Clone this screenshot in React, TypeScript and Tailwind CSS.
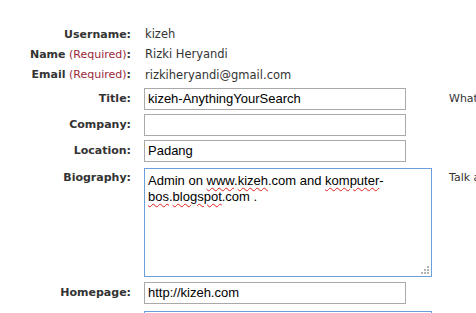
import React from "react";

const LABEL_FONT = { fontFamily: '"DejaVu Sans", Tahoma, sans-serif' };
const INPUT_FONT = { fontFamily: '"Liberation Sans", Arial, sans-serif' };

function Label({ children }: { children: React.ReactNode }) {
  return (
    <div className="w-[131px] shrink-0 text-right text-[11px] font-bold text-[#333]">
      {children}
    </div>
  );
}

function Req() {
  return <span className="font-normal text-[#9a2a3a]"> (Required)</span>;
}

function Wavy({ children }: { children: React.ReactNode }) {
  return (
    <span className="underline decoration-wavy decoration-[#e02020] decoration-1 underline-offset-2">
      {children}
    </span>
  );
}

function Grip() {
  return (
    <svg width="8" height="8" viewBox="0 0 8 8" className="absolute bottom-[2px] right-[2px]">
      <rect x="6" y="0" width="2" height="2" fill="#b5b5b5" />
      <rect x="3" y="3" width="2" height="2" fill="#b5b5b5" />
      <rect x="6" y="3" width="2" height="2" fill="#b5b5b5" />
      <rect x="0" y="6" width="2" height="2" fill="#b5b5b5" />
      <rect x="3" y="6" width="2" height="2" fill="#b5b5b5" />
      <rect x="6" y="6" width="2" height="2" fill="#b5b5b5" />
    </svg>
  );
}

function TextBox({ value }: { value?: string }) {
  return (
    <div
      className="ml-[13px] flex h-[22px] w-[262px] shrink-0 items-center border border-[#a9a9a9] px-[3px] text-[13px] text-black"
      style={INPUT_FONT}
    >
      {value}
    </div>
  );
}

export default function App() {
  return (
    <div className="h-[313px] w-[476px] overflow-hidden bg-white pt-[25px]" style={LABEL_FONT}>
      {/* read-only rows */}
      <div className="flex h-5 items-center">
        <Label>Username:</Label>
        <div className="pl-[14px] text-[11.5px] text-[#333]">kizeh</div>
      </div>
      <div className="flex h-5 items-center">
        <Label>
          Name<Req />:
        </Label>
        <div className="pl-[14px] text-[11.5px] text-[#333]">Rizki Heryandi</div>
      </div>
      <div className="flex h-[21px] items-center">
        <Label>
          Email<Req />:
        </Label>
        <div className="pl-[14px] text-[11.5px] text-[#333]">rizkiheryandi@gmail.com</div>
      </div>

      {/* editable rows */}
      <div className="mt-[2px] flex items-center">
        <Label>Title:</Label>
        <TextBox value="kizeh-AnythingYourSearch" />
        <div className="ml-[43px] shrink-0 whitespace-nowrap text-[11px] text-[#333]">What is your job title?</div>
      </div>
      <div className="mt-[4px] flex items-center">
        <Label>Company:</Label>
        <TextBox />
      </div>
      <div className="mt-[4px] flex items-center">
        <Label>Location:</Label>
        <TextBox value="Padang" />
      </div>
      <div className="mt-[6px] flex items-start">
        <div className="shrink-0 pt-[2px]">
          <Label>Biography:</Label>
        </div>
        <div
          className="relative ml-[13px] h-[109px] w-[288px] shrink-0 whitespace-nowrap border border-[#6a9fd8] px-[3px] pt-[4px] text-[13px] leading-[16px] text-black"
          style={INPUT_FONT}
        >
          Admin on <Wavy>www</Wavy>.<Wavy>kizeh</Wavy>.com and <Wavy>komputer</Wavy>-
          <br />
          <Wavy>bos</Wavy>.<Wavy>blogspot</Wavy>.com .
          <Grip />
        </div>
        <div className="ml-[17px] shrink-0 whitespace-nowrap pt-[2px] text-[11px] text-[#333]">Talk about yourself</div>
      </div>
      <div className="mt-[5px] flex items-center">
        <Label>Homepage:</Label>
        <TextBox value="http://kizeh.com" />
      </div>
      <div className="mt-[7px] flex">
        <div className="w-[131px] shrink-0" />
        <div className="ml-[13px] h-[60px] w-[288px] shrink-0 border border-[#6a9fd8]" />
      </div>
    </div>
  );
}
